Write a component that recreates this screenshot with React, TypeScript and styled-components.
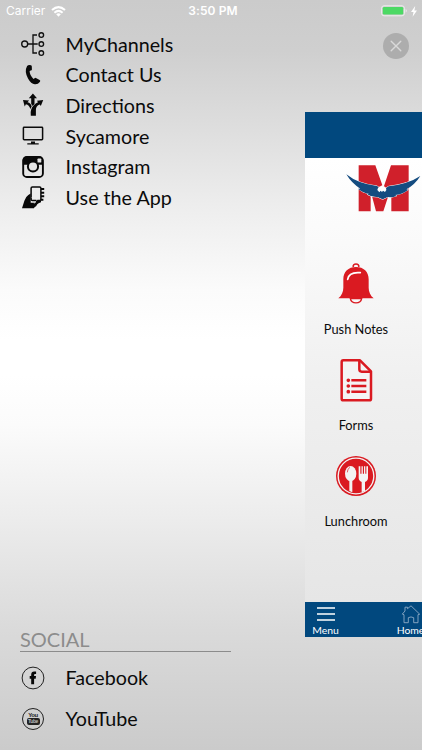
import React from "react";
import styled, { createGlobalStyle } from "styled-components";

const GlobalStyle = createGlobalStyle`
  *, *::before, *::after { box-sizing: border-box; }
  html, body { margin: 0; padding: 0; }
  body { font-family: Lato, "Open Sans", sans-serif; }
  svg { display: block; flex: none; }
`;

const Screen = styled.div`
  width: 422px;
  height: 750px;
  overflow: hidden;
  display: flex;
  flex-direction: column;
  color: #0b0b0b;
  background: linear-gradient(180deg, #cbcbcb 0, #cfcfcf 50px, #dcdcdc 120px, #ededed 205px, #fbfbfb 290px, #ffffff 340px, #ffffff 375px, #fbfbfb 425px, #ececec 520px, #dadada 630px, #cbcbcb 750px);
`;

const StatusBar = styled.header`
  height: 22px;
  flex: none;
  display: grid;
  grid-template-columns: 1fr auto 1fr;
  align-items: center;
  padding: 0 5px 0 6px;
  color: #fff;
  font-family: Inter, sans-serif;
  font-size: 12px;
  line-height: 22px;
`;

const StatusSide = styled.div<{ $end?: boolean }>`
  display: flex;
  align-items: center;
  justify-content: ${(p) => (p.$end ? "flex-end" : "flex-start")};
  gap: ${(p) => (p.$end ? "4px" : "6px")};
`;

const Clock = styled.span`
  padding-left: 3px;
  font-weight: 600;
  letter-spacing: 0.1px;
`;

const Body = styled.div`
  flex: 1;
  display: grid;
  grid-template-columns: 305px 117px;
`;

const Drawer = styled.nav`
  display: flex;
  flex-direction: column;
  justify-content: space-between;
  padding: 7px 74px 11px 20px;
`;

const List = styled.ul<{ $row: number }>`
  list-style: none;
  margin: 0;
  padding: 0;
  display: grid;
  grid-auto-rows: ${(p) => p.$row}px;
`;

const Item = styled.li`
  display: grid;
  grid-template-columns: 45.6px 1fr;
  align-items: center;
  font-size: 19.7px;
  line-height: 26px;

  > :last-child {
    padding-top: 1px;
  }
`;

const SocialTitle = styled.h2`
  margin: 0 0 5px;
  padding-bottom: 0;
  border-bottom: 1px solid #8c8c8c;
  color: #8c8c8c;
  font-size: 20px;
  font-weight: 400;
  line-height: 23px;
`;

const Side = styled.div`
  display: flex;
  flex-direction: column;
  overflow: hidden;
`;

const CloseButton = styled.button`
  width: 26px;
  height: 26px;
  margin: 11px 0 53px 78px;
  flex: none;
  padding: 0;
  border: 0;
  border-radius: 50%;
  background: #adadad;
  display: grid;
  place-items: center;
`;

const Preview = styled.main`
  height: 525px;
  flex: none;
  overflow: hidden;
  display: flex;
  flex-direction: column;
  background: linear-gradient(180deg, #fff 46px, #fafafa 130px, #f0f0f0 270px, #e6e6e6 490px);
`;

const TitleBar = styled.div`
  height: 46px;
  flex: none;
  background: #01487e;
`;

const LogoRow = styled.div`
  height: 105px;
  flex: none;
  padding: 4px 0 0 40px;
`;

const Tile = styled.section`
  width: 102px;
  height: 96.2px;
  flex: none;
  display: flex;
  flex-direction: column;
  align-items: center;
  justify-content: space-between;
  padding-bottom: 21.3px;
  font-size: 12.8px;
  line-height: 18px;
`;

const TabBar = styled.footer`
  width: 130px;
  height: 35px;
  flex: none;
  margin-top: auto;
  display: flex;
  gap: 44px;
  background: #01487e;
`;

const Tab = styled.div`
  width: 41px;
  flex: none;
  display: flex;
  flex-direction: column;
  align-items: center;
  justify-content: space-between;
  padding-top: 3px;
  color: #fff;
  font-size: 10.4px;
  line-height: 13px;
`;

const RED = "#da1a21";

const WifiIcon = () => (
  <svg width="15" height="11" viewBox="0 0 15 11" fill="none" stroke="#fff" strokeWidth="2">
    <path d="M1 4.1Q7.5-1.8 14 4.1M3.4 6.7Q7.5 3 11.6 6.7" />
    <path d="M5.2 8.2Q7.5 6.3 9.8 8.2L7.5 10.7Z" fill="#fff" stroke="none" />
  </svg>
);

const BatteryIcon = () => (
  <svg width="26" height="12" viewBox="0 0 26 12">
    <rect x="0.6" y="0.8" width="22.8" height="10" rx="2.4" fill="none" stroke="#eee" strokeWidth="1" />
    <rect x="1.8" y="2" width="20.4" height="7.6" rx="1.3" fill="#4cd964" />
    <path d="M24.6 4v3.6q1.3-.7 1.3-1.8T24.6 4" fill="#e8e8e8" />
  </svg>
);

const BoltIcon = () => (
  <svg width="6" height="11" viewBox="0 0 6 11">
    <path d="M4.2 0L0 6h2.5L1.6 10.7 6 4.6H3.4Z" fill="#fff" />
  </svg>
);

const ChannelsIcon = () => (
  <svg width="26" height="26" viewBox="0 0 26 26" fill="none" stroke="#111" strokeWidth="1.35">
    <circle cx="4.7" cy="13" r="3" />
    <path d="M7.7 13h10M17 4h-4v18h4" />
    <circle cx="21.3" cy="4" r="2.3" />
    <circle cx="21.3" cy="13" r="2.3" />
    <circle cx="21.3" cy="22" r="2.3" />
  </svg>
);

const PhoneIcon = () => (
  <svg width="26" height="26" viewBox="0 0 26 26">
    <path d="M7.1 4.1Q8.5 2.4 11 3.3q.8.3.8 1.2l.1 3q0 1-1.1 1.1L9.6 9q.1 4.3 3.9 8l1.1-.8q.9-.7 1.8.1l3.2 1.8q1.1.8.4 1.7-2.1 2.8-5.2 2.5Q11.1 22 8 16.5 4.1 9.5 7.1 4.1Z" fill="#080808" />
  </svg>
);

const DirectionsIcon = () => (
  <svg width="26" height="26" viewBox="0 0 26 26" fill="#080808">
    <path d="M12.9 1.5L17 6.2h-2.5V12l-1.8 2-1.5-2V6.2H8.8Z" />
    <path d="M3 8.1l6.1.3-1.6 1.8q3.5.8 4.2 4.4l-1.3 2.3q-1.2-3.8-4.5-4.6l-1.2 2.1Z" />
    <path d="M23.2 8l-2.4 6-1-1.6q-3.9 1.2-3.9 5.4v5.9h-5.1q-.4-4.3.4-6.3 1.9-5 6.8-7.2l-1-1.5Z" />
  </svg>
);

const MonitorIcon = () => (
  <svg width="26" height="26" viewBox="0 0 26 26">
    <rect x="3.4" y="4.3" width="19.2" height="12.4" rx=".7" fill="none" stroke="#0b0b0b" strokeWidth="1.5" />
    <path d="M11 18.5h4v1.7h3.7v1.3H7.3v-1.3H11Z" fill="#0b0b0b" />
  </svg>
);

const InstagramIcon = () => (
  <svg width="26" height="26" viewBox="0 0 26 26">
    <rect x="3.2" y="3" width="19.7" height="20" rx="3.6" fill="none" stroke="#080808" strokeWidth="1.9" />
    <path d="M5 2.8h16q1.8.5 1.8 3v5H18Q16.4 7.7 13 7.7T8 10.8H2.8v-5Q3 3.2 5 2.8Z" fill="#080808" />
    <circle cx="13" cy="12.5" r="5.1" fill="#e3e3e3" stroke="#080808" strokeWidth="2" />
    <rect x="17.5" y="4.6" width="3.8" height="4" rx=".7" fill="#e3e3e3" />
  </svg>
);

const HandPhoneIcon = () => (
  <svg width="26" height="26" viewBox="0 0 26 26">
    <path d="M2 24.2l2.4-7.5Q5.4 13 8.3 11l2.4-1.5v9.3h8.2q-2.2 1.8-2.8 3.5-1.6.3-2.2 1.9Z" fill="#080808" />
    <rect x="11.1" y="3" width="9.8" height="13.6" rx="1.3" fill="#ededed" stroke="#080808" strokeWidth="1.5" />
    <path d="M11.7 13.5h5.8l-1 3.2-2.1 2.7" fill="none" stroke="#ededed" strokeWidth=".9" />
    <path d="M16 16.5h5v1.8l-2.5 1h-3Z" fill="#080808" />
    <path d="M21 5h3.2M21 8.8h3.2M21 12.2h3.2M21 15.7h2.4" stroke="#080808" strokeWidth="2.1" />
  </svg>
);

const FacebookIcon = () => (
  <svg width="26" height="26" viewBox="0 0 26 26">
    <circle cx="13" cy="13" r="10.9" fill="none" stroke="#222" strokeWidth="1" />
    <path d="M11.2 19.2v-5.4H9.7v-2.7h1.5V9.5q0-3 3-3h1.9v2.6h-1.2q-.8 0-.8.8v1.2H16l-.3 2.7h-1.6v5.4Z" fill="#080808" />
  </svg>
);

const YoutubeBadge = styled.span`
  width: 22px;
  height: 22px;
  margin-left: 2px;
  border: 1px solid #222;
  border-radius: 50%;
  display: flex;
  flex-direction: column;
  align-items: center;
  padding-top: 3px;
  color: #222;
  font: 700 6px/6px "Liberation Sans Narrow", "Liberation Sans", sans-serif;
  letter-spacing: -0.4px;
`;

const YoutubeTube = styled.span`
  width: 13px;
  height: 7px;
  border-radius: 2px;
  background: #222;
  color: #bbb;
  font-size: 5px;
  line-height: 7px;
  text-align: center;
`;

const YoutubeIcon = () => (
  <YoutubeBadge>
    <span>You</span>
    <YoutubeTube>Tube</YoutubeTube>
  </YoutubeBadge>
);

const CrossIcon = () => (
  <svg width="12" height="12" viewBox="0 0 12 12" stroke="#d9d9d9" strokeWidth="1.4" strokeLinecap="round">
    <path d="M1.2 1.2l9.6 9.6M10.8 1.2L1.2 10.8" />
  </svg>
);

const EagleLogo = () => (
  <svg width="77" height="52" viewBox="0 0 231 156">
    <path d="M41 10h50l24 68 23-68h53v138h-52V74l-24 74H93L77 88v60H41Z" fill="#d0202b" />
    <path
      d="M4 37Q40 66 96 72L113 84 131 73Q190 66 226 42 210 68 184 82L190 83Q172 97 150 99L156 101Q142 107 128 105L113 112 98 105Q80 106 66 97L73 96Q52 92 39 80L46 80Q20 64 4 37Z"
      fill="#144c80"
      stroke="#fff"
      strokeWidth="3"
      paintOrder="stroke"
      strokeLinejoin="round"
    />
    <path d="M97 84q2-10 11-12l5-4 1 5q10 1 10 11l-4 6-6-4-3 4-4-4-4 5Z" fill="#fff" />
  </svg>
);

const BellIcon = () => (
  <svg width="36" height="42" viewBox="0 0 108 126">
    <path d="M54 12c23 0 38 14 38 37v25c0 12 5 24 15 32H1c10-8 15-20 15-32V49c0-23 15-37 38-37Z" fill={RED} />
    <path d="M46 12c-4-12 20-12 16 0" fill="none" stroke={RED} strokeWidth="5" />
    <path d="M37 107c3 17 31 17 34 0Z" fill="#f8f8f8" stroke={RED} strokeWidth="4" />
    <path d="M29 49C31 34 43 27 67 29" fill="none" stroke="#fff" strokeWidth="5" strokeLinecap="round" />
  </svg>
);

const FormIcon = () => (
  <svg width="33" height="43" viewBox="0 0 99 129" stroke={RED} strokeWidth="7.5" strokeLinejoin="round">
    <path d="M10 4h50l33 33v82q0 5-5 5H10q-5 0-5-5V9q0-5 5-5Z" fill="#f4f4f4" />
    <path d="M58 5v26q0 7 7 7h27" fill="none" />
    <path d="M34 64h45M34 81h45M34 98h45" />
    <path d="M24.9 64h.1M24.9 81h.1M24.9 98h.1" strokeWidth="11" strokeLinecap="round" />
  </svg>
);

const CutleryIcon = () => (
  <svg width="42" height="42" viewBox="0 0 126 126">
    <circle cx="63" cy="63" r="60" fill={RED} />
    <circle cx="63" cy="63" r="53.5" fill="none" stroke="#f3f3f3" strokeWidth="4" />
    <ellipse cx="47" cy="56" rx="17" ry="23" fill="#f3f3f3" />
    <path d="M43 78h9v34l-9-4Z" fill="#f3f3f3" />
    <path d="M37 52q0-11 8-15" fill="none" stroke={RED} strokeWidth="2" />
    <path d="M71 34h5v22h3.5V34h4v22H87V34h4v22h3V34h5v34q0 9-9 13v27l-10 4V81q-9-4-9-13Z" fill="#f3f3f3" />
  </svg>
);

const MenuIcon = () => (
  <svg width="18" height="17" viewBox="0 0 18 17" stroke="#fff" strokeWidth="1.3">
    <path d="M0 3h18M0 9h18M0 15h18" />
  </svg>
);

const HomeIcon = () => (
  <svg width="20" height="19" viewBox="0 0 20 19" fill="none" stroke="#8eacc6" strokeWidth="0.9">
    <path d="M3 17.7v-8l-1.7-.6L4 6V2.2h2.5v1.5L10 .8l8.7 8.4-1.7.5v8h-4.3v-5q-2.7-1.5-5.4 0v5Z" />
  </svg>
);

const links = [
  { label: "MyChannels", Icon: ChannelsIcon },
  { label: "Contact Us", Icon: PhoneIcon },
  { label: "Directions", Icon: DirectionsIcon },
  { label: "Sycamore", Icon: MonitorIcon },
  { label: "Instagram", Icon: InstagramIcon },
  { label: "Use the App", Icon: HandPhoneIcon },
];

const social = [
  { label: "Facebook", Icon: FacebookIcon },
  { label: "YouTube", Icon: YoutubeIcon },
];

const tiles = [
  { label: "Push Notes", Icon: BellIcon },
  { label: "Forms", Icon: FormIcon },
  { label: "Lunchroom", Icon: CutleryIcon },
];

export default function App() {
  return (
    <>
      <GlobalStyle />
      <Screen>
        <StatusBar>
          <StatusSide>
            <span>Carrier</span>
            <WifiIcon />
          </StatusSide>
          <Clock>3:50 PM</Clock>
          <StatusSide $end>
            <BatteryIcon />
            <BoltIcon />
          </StatusSide>
        </StatusBar>
        <Body>
          <Drawer>
            <List $row={30.6}>
              {links.map(({ label, Icon }) => (
                <Item key={label}>
                  <Icon />
                  <span>{label}</span>
                </Item>
              ))}
            </List>
            <section>
              <SocialTitle>SOCIAL</SocialTitle>
              <List $row={40.8}>
                {social.map(({ label, Icon }) => (
                  <Item key={label}>
                    <Icon />
                    <span>{label}</span>
                  </Item>
                ))}
              </List>
            </section>
          </Drawer>
          <Side>
            <CloseButton aria-label="Close">
              <CrossIcon />
            </CloseButton>
            <Preview>
              <TitleBar />
              <LogoRow>
                <EagleLogo />
              </LogoRow>
              {tiles.map(({ label, Icon }) => (
                <Tile key={label}>
                  <Icon />
                  <span>{label}</span>
                </Tile>
              ))}
              <TabBar>
                <Tab>
                  <MenuIcon />
                  <span>Menu</span>
                </Tab>
                <Tab>
                  <HomeIcon />
                  <span>Home</span>
                </Tab>
              </TabBar>
            </Preview>
          </Side>
        </Body>
      </Screen>
    </>
  );
}
